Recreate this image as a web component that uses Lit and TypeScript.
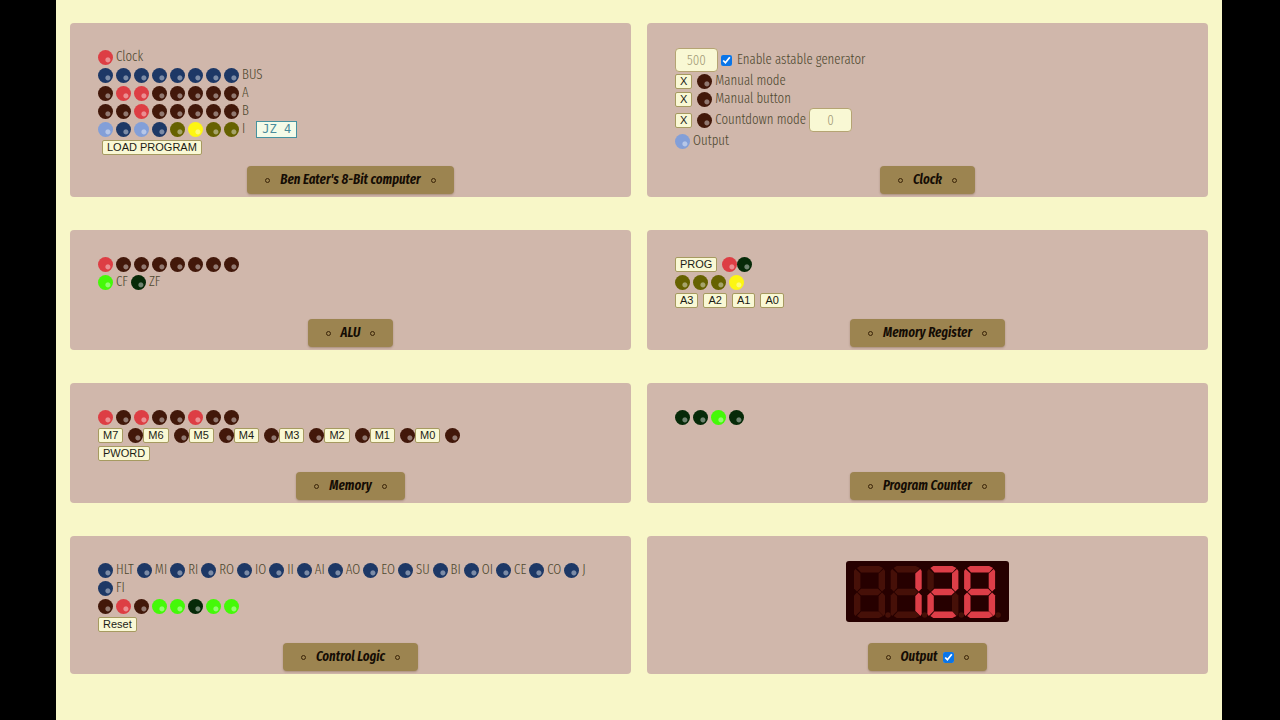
import { LitElement, html, css, svg } from "lit";
import { customElement, property } from "lit/decorators.js";

/** A row of small lamps. Each letter of `pattern` picks one lamp colour. */
const LAMP: Record<string, string> = {
  R: "red-on",
  r: "red-off",
  B: "blue-on",
  b: "blue-off",
  Y: "yellow-on",
  y: "yellow-off",
  G: "green-on",
  g: "green-off",
};

@customElement("led-row")
class LedRow extends LitElement {
  @property() pattern = "";

  static styles = css`
    :host {
      display: inline-flex;
      gap: 3px;
    }
    .led {
      width: 15px;
      height: 15px;
      border-radius: 50%;
      background-image: radial-gradient(
        circle at 66% 66%,
        rgba(255, 255, 255, 0.42) 0 2px,
        rgba(255, 255, 255, 0) 3px
      );
    }
    .red-on { background-color: #dd3e44; }
    .red-off { background-color: #42180a; }
    .blue-on { background-color: #839fd8; }
    .blue-off { background-color: #1d3866; }
    .yellow-on { background-color: #fdf612; }
    .yellow-off { background-color: #666200; }
    .green-on { background-color: #44f908; }
    .green-off { background-color: #062a08; }
  `;

  render() {
    return [...this.pattern].map((c) => html`<span class="led ${LAMP[c]}"></span>`);
  }
}

/** Four-digit seven-segment display. */
const SEGMENTS: Record<string, string> = {
  a: "M6 0H25L29 2L25 6.4H7L3 2Z",
  b: "M29.6 3L31 5V22.4L28 25.4L24.6 22V7.4Z",
  c: "M28 26.6L31 29.6V48L29.6 50L24.6 45V30Z",
  d: "M7 45.6H25L29 50L25 52H6L3 50Z",
  e: "M3 26.6L6.4 30V45L1.4 50L0 48V29.6Z",
  f: "M1.4 3L6.4 7.4V22L3 25.4L0 22.4V5Z",
  g: "M7 22.8H24L27.4 26L24 29.2H7L3.6 26Z",
};

@customElement("seven-segment")
class SevenSegment extends LitElement {
  @property({ type: Array }) digits: string[] = [];

  static styles = css`
    :host {
      display: block;
    }
    .display {
      display: block;
      width: 163px;
      height: 61px;
    }
    .back { fill: #260000; }
    .on { fill: #dd3e48; }
    .off { fill: #461008; }
  `;

  render() {
    return html`<svg class="display" viewBox="0 0 163 61" role="img" aria-label="Output display">
      <rect class="back" width="163" height="61" rx="3"></rect>
      ${this.digits.map(
        (lit, i) => svg`<g transform="translate(${8 + i * 36.7} 5)">
          ${Object.entries(SEGMENTS).map(
            ([name, d]) => svg`<path class=${lit.includes(name) ? "on" : "off"} d=${d}></path>`
          )}
          <circle class="off" cx="34" cy="49" r="2.7"></circle>
        </g>`
      )}
    </svg>`;
  }
}

const SIGNALS = ["HLT", "MI", "RI", "RO", "IO", "II", "AI", "AO", "EO", "SU", "BI", "OI", "CE", "CO", "J", "FI"];
const ADDRESS = ["A3", "A2", "A1", "A0"];
const MEMORY = ["M7", "M6", "M5", "M4", "M3", "M2", "M1", "M0"];

@customElement("app-root")
class AppRoot extends LitElement {
  static styles = css`
    :host {
      display: block;
      min-height: 100vh;
      box-sizing: border-box;
      padding: 0 58px 0 56px;
      background: #000;
      color: #4f4930;
      font: 300 14px/18px "Fira Sans Extra Condensed", "Fira Sans Condensed", "Open Sans Condensed", "Noto Sans Condensed", "Roboto Condensed", Lato, sans-serif;
    }
    .page {
      box-sizing: border-box;
      min-height: 100vh;
      padding: 23px 14px;
      background: #f8f7c8;
    }
    .board {
      display: grid;
      grid-template-columns: minmax(0, 1fr) minmax(0, 1fr);
      gap: 33px 16px;
    }
    .module {
      display: flex;
      flex-direction: column;
      gap: 10px;
      padding: 25px 28px 3px;
      border-radius: 4px;
      background: #d0b7ab;
    }
    .content {
      flex: 1;
      min-height: 54px;
    }
    .centered {
      display: flex;
      justify-content: center;
      align-items: flex-start;
      min-height: 72px;
    }
    .line {
      display: flex;
      align-items: center;
      gap: 3px;
      min-height: 18px;
    }
    .wrap { flex-wrap: wrap; row-gap: 0; }
    .indent { padding-left: 4px; }
    .tight { gap: 0; }
    .spaced { gap: 5px; }
    .pair {
      display: inline-flex;
      align-items: center;
      gap: 3px;
      height: 18px;
    }
    .switch {
      display: inline-flex;
      align-items: center;
      gap: 5px;
    }
    .title {
      display: flex;
      align-items: center;
      align-self: center;
      gap: 9px;
      box-sizing: border-box;
      height: 28px;
      margin: 0;
      padding: 0 17px;
      border-radius: 4px;
      background: #9c8450;
      box-shadow: 0 1px 2px rgba(80, 50, 20, 0.3);
      color: #140c04;
      font-size: 14px;
      font-weight: 600;
      font-style: italic;
    }
    .title::before,
    .title::after {
      content: "";
      box-sizing: border-box;
      width: 5px;
      height: 5px;
      margin: 0 1px;
      border: 1px solid #3a2408;
      border-radius: 50%;
    }
    .title label {
      display: flex;
      align-items: center;
      gap: 6px;
    }
    .button {
      box-sizing: border-box;
      height: 15px;
      padding: 0 4px;
      border: 1px solid #a69a60;
      border-radius: 2px;
      background: #f9f8d4;
      color: #1c1c14;
      font: 11px/13px "Liberation Sans", Arial, sans-serif;
    }
    .number {
      box-sizing: border-box;
      width: 43px;
      height: 24px;
      padding: 0;
      border: 1px solid #b5a473;
      border-radius: 4px;
      background: #f9f8d4;
      color: #a49c78;
      font: inherit;
      text-align: center;
    }
    .check {
      width: 11px;
      height: 11px;
      margin: 0;
      accent-color: #0a75e8;
    }
    .enable {
      display: flex;
      align-items: center;
      gap: 5px;
    }
    .decoded {
      box-sizing: border-box;
      height: 17px;
      margin-left: 8px;
      padding: 0 5px;
      border: 1px solid #4592a0;
      background: #f4fbe8;
      color: #4b8c9c;
      font: 12px/15px "DejaVu Sans Mono", monospace;
      white-space: pre;
    }
  `;

  private leds(pattern: string) {
    return html`<led-row pattern=${pattern}></led-row>`;
  }

  private module(title: unknown, body: unknown, extra = "") {
    return html`<section class="module">
      <div class="content ${extra}">${body}</div>
      <h2 class="title">${title}</h2>
    </section>`;
  }

  render() {
    return html`<main class="page">
      <div class="board">
        ${this.module(
          html`<span>Ben Eater's 8-Bit computer</span>`,
          html`
            <div class="line">${this.leds("R")}<span>Clock</span></div>
            <div class="line">${this.leds("bbbbbbbb")}<span>BUS</span></div>
            <div class="line">${this.leds("rRRrrrrr")}<span>A</span></div>
            <div class="line">${this.leds("rrRrrrrr")}<span>B</span></div>
            <div class="line">${this.leds("BbBbyYyy")}<span>I</span><output class="decoded">JZ 4</output></div>
            <div class="line indent"><button class="button">LOAD PROGRAM</button></div>
          `
        )}
        ${this.module(
          html`<span>Clock</span>`,
          html`
            <div class="line">
              <input class="number" type="text" value="500" aria-label="Period" />
              <label class="enable"><input class="check" type="checkbox" checked />Enable astable generator</label>
            </div>
            <div class="line">
              <span class="switch"><button class="button">X</button>${this.leds("r")}</span><span>Manual mode</span>
            </div>
            <div class="line">
              <span class="switch"><button class="button">X</button>${this.leds("r")}</span><span>Manual button</span>
            </div>
            <div class="line">
              <span class="switch"><button class="button">X</button>${this.leds("r")}</span>
              <label for="countdown">Countdown mode</label>
              <input class="number" id="countdown" type="text" value="0" />
            </div>
            <div class="line">${this.leds("B")}<span>Output</span></div>
          `
        )}
        ${this.module(
          html`<span>ALU</span>`,
          html`
            <div class="line">${this.leds("Rrrrrrrr")}</div>
            <div class="line">
              <span class="pair">${this.leds("G")}CF</span><span class="pair">${this.leds("g")}ZF</span>
            </div>
          `
        )}
        ${this.module(
          html`<span>Memory Register</span>`,
          html`
            <div class="line tight">
              <span class="switch"><button class="button">PROG</button>${this.leds("R")}</span>${this.leds("g")}
            </div>
            <div class="line">${this.leds("yyyY")}</div>
            <div class="line spaced">${ADDRESS.map((a) => html`<button class="button">${a}</button>`)}</div>
          `
        )}
        ${this.module(
          html`<span>Memory</span>`,
          html`
            <div class="line">${this.leds("RrRrrRrr")}</div>
            <div class="line tight">
              ${MEMORY.map(
                (m) => html`<span class="switch"><button class="button">${m}</button>${this.leds("r")}</span>`
              )}
            </div>
            <div class="line"><button class="button">PWORD</button></div>
          `
        )}
        ${this.module(html`<span>Program Counter</span>`, html`<div class="line">${this.leds("ggGg")}</div>`)}
        ${this.module(
          html`<span>Control Logic</span>`,
          html`
            <div class="line wrap">
              ${SIGNALS.map((s) => html`<span class="pair">${this.leds("b")}${s}</span>`)}
            </div>
            <div class="line">${this.leds("rRrGGgGG")}</div>
            <div class="line"><button class="button">Reset</button></div>
          `
        )}
        ${this.module(
          html`<label>Output<input class="check" type="checkbox" checked /></label>`,
          html`<seven-segment .digits=${["", "bc", "abged", "abcdefg"]}></seven-segment>`,
          "centered"
        )}
      </div>
    </main>`;
  }
}
